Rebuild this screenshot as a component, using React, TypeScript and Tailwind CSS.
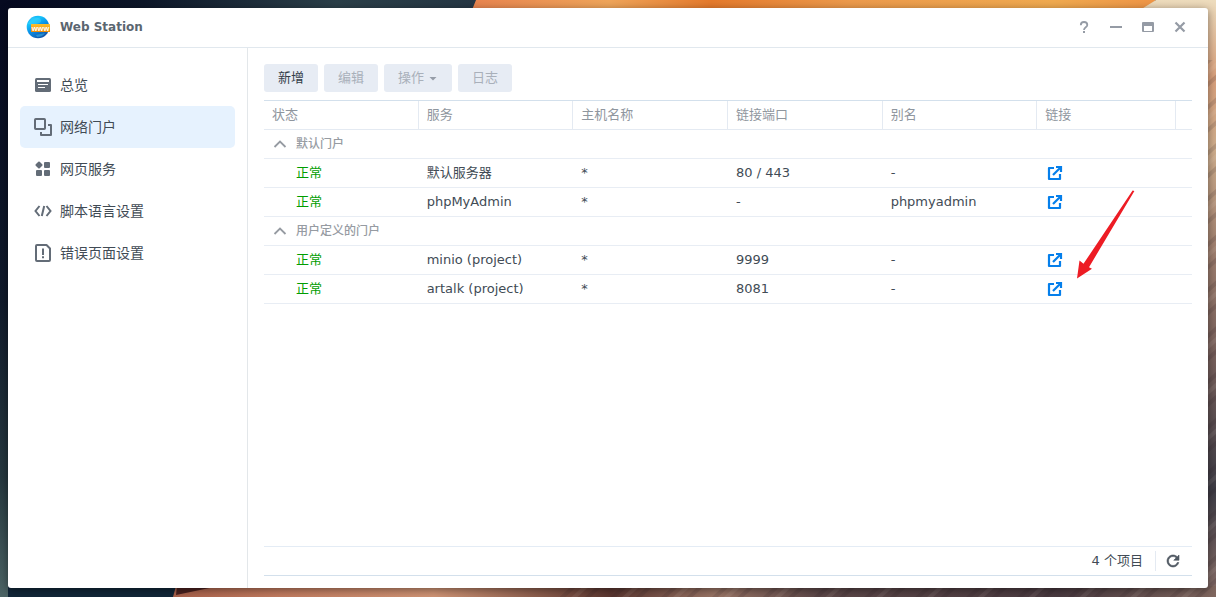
import { useState } from "react";
import type { ReactNode } from "react";

type Portal = {
    service: string;
    host: string;
    port: string;
    alias: string;
    marked?: boolean;
};

type PortalGroup = {
    title: string;
    portals: Portal[];
};

const groups: PortalGroup[] = [
    {
        title: "默认门户",
        portals: [
            { service: "默认服务器", host: "*", port: "80 / 443", alias: "-" },
            { service: "phpMyAdmin", host: "*", port: "-", alias: "phpmyadmin" }
        ]
    },
    {
        title: "用户定义的门户",
        portals: [
            { service: "minio (project)", host: "*", port: "9999", alias: "-" },
            { service: "artalk (project)", host: "*", port: "8081", alias: "-", marked: true }
        ]
    }
];

const columns = ["状态", "服务", "主机名称", "链接端口", "别名", "链接"];

const navItems: { label: string; icon: ReactNode }[] = [
    {
        label: "总览",
        icon: (
            <>
                <rect x="1" y="2" width="16" height="14" rx="1.5" fill="currentColor" />
                <path d="M3 5h12" stroke="#fff" strokeWidth="2" />
                <path d="M4 8.5h10M4 11.5h7" stroke="#fff" strokeWidth="1.2" />
            </>
        )
    },
    {
        label: "网络门户",
        icon: (
            <>
                <rect x="1" y="1" width="10" height="10" rx="0.8" stroke="currentColor" strokeWidth="2" />
                <path d="M14 7h3v10H7v-3" stroke="currentColor" strokeWidth="2" strokeLinejoin="round" />
            </>
        )
    },
    {
        label: "网页服务",
        icon: (
            <g fill="currentColor">
                <rect x="2.2" y="2.2" width="5.6" height="5.6" rx="1" transform="rotate(45 5 5)" />
                <rect x="10" y="2" width="6" height="6" rx="1" />
                <rect x="2" y="10" width="6" height="6" rx="1" />
                <rect x="10" y="10" width="6" height="6" rx="1" />
            </g>
        )
    },
    {
        label: "脚本语言设置",
        icon: <path d="M5.5 4 1.5 9l4 5M12.5 4l4 5-4 5M10.2 4 7.8 14" stroke="currentColor" strokeWidth="2" />
    },
    {
        label: "错误页面设置",
        icon: (
            <>
                <path d="M3 1h9.500L16 4.500V16a1 1 0 0 1-1 1H3a1 1 0 0 1-1-1V2a1 1 0 0 1 1-1z" stroke="currentColor" strokeWidth="2" strokeLinejoin="round" />
                <path d="M9 4.5V11M9 12.3v1.9" stroke="currentColor" strokeWidth="2" />
            </>
        )
    }
];

const windowControls: { label: string; icon: ReactNode }[] = [
    {
        label: "帮助",
        icon: (
            <>
                <path d="M2.8 4.2C2.8 2.3 4.1 1 6 1s3.3 1.1 3.3 2.9C9.3 6.3 6 6.2 6 9" stroke="currentColor" strokeWidth="1.8" />
                <rect x="5" y="10" width="2" height="2" fill="currentColor" />
            </>
        )
    },
    { label: "最小化", icon: <path d="M0 6h12" stroke="currentColor" strokeWidth="2" /> },
    {
        label: "最大化",
        icon: <path fillRule="evenodd" d="M1 1h10a1 1 0 0 1 1 1v8a1 1 0 0 1-1 1H1a1 1 0 0 1-1-1V2a1 1 0 0 1 1-1zm1 4v5h8V5z" fill="currentColor" />
    },
    { label: "关闭", icon: <path d="m1.5 1.5 9 9M10.5 1.5l-9 9" stroke="currentColor" strokeWidth="2.2" /> }
];

function Wallpaper() {
    return (
        <svg
            className="absolute inset-0 h-full w-full"
            viewBox="0 0 1216 597"
            preserveAspectRatio="none"
            aria-hidden="true"
        >
            <defs>
                <linearGradient id="night">
                    <stop offset="0" stopColor="#050920" />
                    <stop offset="0.3" stopColor="#0d1729" />
                    <stop offset="0.7" stopColor="#2b3f49" />
                    <stop offset="1" stopColor="#253644" />
                </linearGradient>
                <linearGradient id="shore" x2="0" y2="1">
                    <stop offset="0" stopColor="#060a20" />
                    <stop offset="0.5" stopColor="#101a2b" />
                    <stop offset="0.8" stopColor="#26383f" />
                    <stop offset="1" stopColor="#4c6465" />
                </linearGradient>
                <linearGradient id="sunset">
                    <stop offset="0" stopColor="#e8844f" />
                    <stop offset="0.2" stopColor="#efa55a" />
                    <stop offset="0.35" stopColor="#e57a2c" />
                    <stop offset="0.55" stopColor="#ec9a4c" />
                    <stop offset="0.85" stopColor="#f0aa50" />
                    <stop offset="1" stopColor="#ef9546" />
                </linearGradient>
                <linearGradient id="cliff" x2="0" y2="1">
                    <stop offset="0" stopColor="#eddcbd" />
                    <stop offset="0.13" stopColor="#d9a07c" />
                    <stop offset="0.25" stopColor="#cfae8d" />
                    <stop offset="0.42" stopColor="#9f7f6f" />
                    <stop offset="0.6" stopColor="#77605c" />
                    <stop offset="0.82" stopColor="#3e3c46" />
                    <stop offset="1" stopColor="#8a706a" />
                </linearGradient>
                <linearGradient id="sand">
                    <stop offset="0" stopColor="#a9614b" />
                    <stop offset="0.1" stopColor="#c27b5f" />
                    <stop offset="0.25" stopColor="#d09475" />
                    <stop offset="0.42" stopColor="#5b3630" />
                    <stop offset="0.52" stopColor="#9a7566" />
                    <stop offset="0.62" stopColor="#5c4748" />
                    <stop offset="0.85" stopColor="#4a3a40" />
                    <stop offset="1" stopColor="#80675f" />
                </linearGradient>
                <pattern id="strata" width="60" height="34" patternUnits="userSpaceOnUse" patternTransform="rotate(-42)">
                    <path d="M0 4h60M0 21h60" stroke="#2c1c26" strokeOpacity="0.14" strokeWidth="4" />
                    <path d="M0 12h60" stroke="#fff0dc" strokeOpacity="0.08" strokeWidth="4" />
                </pattern>
            </defs>
            <rect width="1216" height="597" fill="#101a2b" />
            <rect width="480" height="10" fill="url(#night)" />
            <rect width="10" height="597" fill="url(#shore)" />
            <path d="M476 0h680l-12 10H472z" fill="url(#sunset)" />
            <path d="M1156 0h60v597h-12V10h-64z" fill="url(#cliff)" />
            <path d="M8 586h170v11H8z" fill="#112638" />
            <path d="M176 586h1040v11H173z" fill="url(#sand)" />
            <path d="M177 586h42l-43 9z" fill="#4a211f" />
            <path d="M560 584h656v13H560zM1206 60h10v537h-10z" fill="url(#strata)" />
        </svg>
    );
}

function AppLogo() {
    return (
        <svg width="24" height="24" viewBox="0 0 24 24" aria-hidden="true">
            <defs>
                <linearGradient id="globe" x2="0.6" y2="1">
                    <stop offset="0" stopColor="#0a9df2" />
                    <stop offset="0.3" stopColor="#16c5fb" />
                    <stop offset="0.6" stopColor="#0a90e8" />
                    <stop offset="1" stopColor="#1456a8" />
                </linearGradient>
                <linearGradient id="banner" x2="0" y2="1">
                    <stop offset="0" stopColor="#ffbf2c" />
                    <stop offset="1" stopColor="#ef8d08" />
                </linearGradient>
            </defs>
            <circle cx="12" cy="12" r="11.3" fill="url(#globe)" />
            <path d="M7 2c3 1 7 0 8 3s-4 4-9 5l-4-1c1-3 3-6 5-7zM10 20l9-2c-2 3-5 4-8 4z" fill="#4fe0ff" fillOpacity="0.35" />
            <rect x="5" y="9" width="19" height="8" rx="0.5" fill="url(#banner)" />
            <text x="14.5" y="15.500" textAnchor="middle" fontFamily="Liberation Sans, sans-serif" fontSize="7.500" fontWeight="700" fill="#fff">www</text>
        </svg>
    );
}

function OpenIcon() {
    return (
        <svg width="20" height="20" viewBox="0 0 20 20" fill="none" stroke="currentColor" strokeWidth="2.2" aria-hidden="true">
            <path d="M9 5H4v11h11v-5" strokeLinejoin="round" />
            <path d="M11 4h5v5M16 4l-8 8" />
        </svg>
    );
}

// Hand drawn pointer that hangs off the newest portal's link
function Pointer() {
    return (
        <svg
            className="pointer-events-none absolute bottom-5 left-8 h-[90px] w-[58px]"
            viewBox="0 0 58 90"
            aria-hidden="true"
        >
            <path d="M55.600 1.400 57.400 2 12 78.200l3 1.600L0 89.500l2.500-18 4 3.300Z" fill="#ed1c24" />
        </svg>
    );
}

function GroupRows({ title, portals }: PortalGroup) {
    const [open, setOpen] = useState(true);

    return (
        <tbody>
            <tr>
                <td colSpan={7} className="h-[29px] border-b border-[#e8edf4] p-0">
                    <button
                        type="button"
                        aria-expanded={open}
                        onClick={() => setOpen(!open)}
                        className="flex h-7 items-center gap-2 pl-2 text-xs font-medium text-[#969ba2]"
                    >
                        <svg width="16" height="16" viewBox="0 0 16 16" fill="none" className={open ? "" : "rotate-180"}>
                            <path d="m2.500 11 5.500-5.500 5.500 5.500" stroke="currentColor" strokeWidth="1.800" />
                        </svg>
                        {title}
                    </button>
                </td>
            </tr>
            {open && portals.map((portal) => (
                <tr key={portal.service} className="[&>td]:h-[29px] [&>td]:border-b [&>td]:border-[#e8edf4] [&>td]:px-2 [&>td]:py-0">
                    <td><span className="pl-6 text-[#009d00]">正常</span></td>
                    <td>{portal.service}</td>
                    <td>{portal.host}</td>
                    <td>{portal.port}</td>
                    <td>{portal.alias}</td>
                    <td>
                        <div className="relative flex">
                            <a href="#open" aria-label={`打开 ${portal.service}`} className="text-[#057feb]">
                                <OpenIcon />
                            </a>
                            {portal.marked && <Pointer />}
                        </div>
                    </td>
                    <td />
                </tr>
            ))}
        </tbody>
    );
}

export default function App() {
    const [active, setActive] = useState("网络门户");

    return (
        <div className="relative flex min-h-screen p-2 pb-[9px] font-['DejaVu_Sans','Noto_Sans_CJK_SC',sans-serif] text-[13px] leading-5 text-[#414b55]">
            <Wallpaper />

            <div className="relative flex flex-1 flex-col rounded-[3px] bg-white shadow-[0_2px_8px_rgba(0,0,0,0.45)]">
                <header className="flex h-10 items-center border-b border-[#e1e8ee] pr-3 pb-0.5 pl-[18px]">
                    <AppLogo />
                    <h1 className="flex-1 pl-2.5 text-xs font-bold text-[#5b6670]">Web Station</h1>
                    {windowControls.map((control) => (
                        <button
                            key={control.label}
                            type="button"
                            aria-label={control.label}
                            className="flex h-8 w-8 items-center justify-center text-[#959ba5]"
                        >
                            <svg width="12" height="12" viewBox="0 0 12 12" fill="none">{control.icon}</svg>
                        </button>
                    ))}
                </header>

                <div className="flex flex-1">
                    <nav className="w-60 shrink-0 border-r border-[#e3e7ea] px-3 pt-4">
                        {navItems.map((item) => (
                            <button
                                key={item.label}
                                type="button"
                                onClick={() => setActive(item.label)}
                                className={`flex h-[42px] w-full items-center gap-2 rounded-[5px] px-3.5 text-sm ${active === item.label ? "bg-[#e6f2fe]" : ""}`}
                            >
                                <svg width="18" height="18" viewBox="0 0 18 18" fill="none" className="text-[#636c77]">
                                    {item.icon}
                                </svg>
                                {item.label}
                            </button>
                        ))}
                    </nav>

                    <main className="flex min-w-0 flex-1 flex-col px-4 pt-4 pb-3">
                        <div className="flex gap-1.5 pb-2">
                            <button type="button" className="h-7 rounded-[3px] bg-[#e7ecf4] px-3.5 text-[#333d48]">新增</button>
                            <button type="button" disabled className="h-7 rounded-[3px] bg-[#e7ecf4] px-3.5 text-[#a9b0ba]">编辑</button>
                            <button type="button" disabled className="flex h-7 items-center gap-1 rounded-[3px] bg-[#e7ecf4] px-3.5 text-[#a9b0ba]">
                                操作
                                <svg width="10" height="10" viewBox="0 0 10 10" aria-hidden="true">
                                    <path d="M1.5 4h7L5 7.5z" fill="#969da8" />
                                </svg>
                            </button>
                            <button type="button" disabled className="h-7 rounded-[3px] bg-[#e7ecf4] px-3.5 text-[#a9b0ba]">日志</button>
                        </div>

                        <table className="w-full table-fixed border-separate border-spacing-0 border-t border-[#d3e0ec] text-left">
                            <colgroup>
                                <col className="w-1/6" />
                                <col className="w-1/6" />
                                <col className="w-1/6" />
                                <col className="w-1/6" />
                                <col className="w-1/6" />
                                <col className="w-[15%]" />
                                <col />
                            </colgroup>
                            <thead>
                                <tr>
                                    {columns.map((column) => (
                                        <th key={column} className="h-[29px] border-r border-b border-[#e4eaf2] px-2 py-0 font-normal text-[#8f969e]">
                                            {column}
                                        </th>
                                    ))}
                                    <td className="border-b border-[#e4eaf2]" />
                                </tr>
                            </thead>
                            {groups.map((group) => <GroupRows key={group.title} {...group} />)}
                        </table>

                        <footer className="mt-auto flex h-[30px] items-center justify-end border-t border-b border-t-[#e4ecf5] border-b-[#d3e0ec] pr-2.5">
                            <span className="pr-3">4 个项目</span>
                            <button type="button" aria-label="刷新" className="flex h-5 items-center border-l border-[#e4eaf2] pl-2 text-[#4f5862]">
                                <svg width="18" height="18" viewBox="0 0 24 24" fill="currentColor" stroke="currentColor" strokeWidth="0.8">
                                    <path d="M17.65 6.35C16.2 4.9 14.21 4 12 4c-4.42 0-7.99 3.58-7.99 8s3.57 8 7.99 8c3.73 0 6.84-2.55 7.73-6h-2.08c-.82 2.33-3.04 4-5.65 4-3.31 0-6-2.69-6-6s2.69-6 6-6c1.66 0 3.14.69 4.22 1.78L13 11h7V4l-2.35 2.35z" />
                                </svg>
                            </button>
                        </footer>
                    </main>
                </div>
            </div>
        </div>
    );
}
